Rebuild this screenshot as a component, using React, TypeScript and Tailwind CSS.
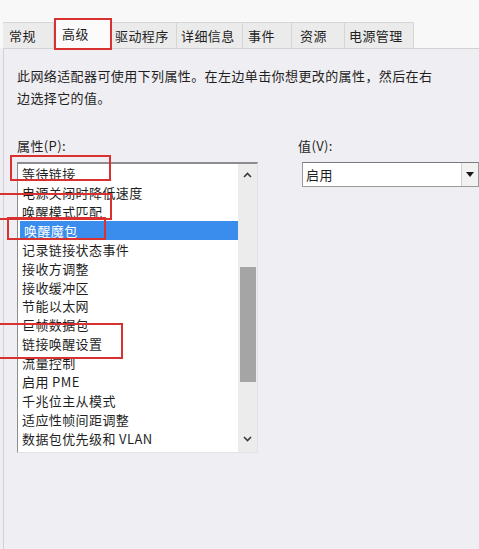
import React from 'react';

const FONT = '"Noto Sans CJK SC", "Noto Sans", "Liberation Sans", sans-serif';

const tabs = [
  { label: '常规', w: 'w-[51px] pl-[6px]' },
  { label: '高级', w: 'w-[58px] pl-[8px]', active: true },
  { label: '驱动程序', w: 'w-[65px] pl-[3px]' },
  { label: '详细信息', w: 'w-[66px] pl-[4px]' },
  { label: '事件', w: 'w-[49px] pl-[5px]' },
  { label: '资源', w: 'w-[53px] pl-[8px]' },
  { label: '电源管理', w: 'w-[69px] pl-[4px]' },
];

const properties = [
  '等待链接',
  '电源关闭时降低速度',
  '唤醒模式匹配',
  '唤醒魔包',
  '记录链接状态事件',
  '接收方调整',
  '接收缓冲区',
  '节能以太网',
  '巨帧数据包',
  '链接唤醒设置',
  '流量控制',
  '启用 PME',
  '千兆位主从模式',
  '适应性帧间距调整',
  '数据包优先级和 VLAN',
];

// red annotation frames drawn over the screenshot
const marks = [
  'left-[54px] top-[18px] w-[58px] h-[32px]',
  'left-[10px] top-[155px] w-[101px] h-[26px]',
  'left-[-2px] top-[193px] w-[114px] h-[27px]',
  'left-[7px] top-[217px] w-[99px] h-[23px]',
  'left-[-2px] top-[323px] w-[125px] h-[36px]',
];

const Chevron = ({ up }: { up?: boolean }) => (
  <svg width="9" height="6" viewBox="0 0 9 6">
    <path
      d={up ? 'M1 5 L4.5 1.5 L8 5' : 'M1 1 L4.5 4.5 L8 1'}
      fill="none"
      stroke="#3a3a3a"
      strokeWidth="1.6"
    />
  </svg>
);

export default function App() {
  return (
    <div
      className="relative w-[479px] h-[549px] overflow-hidden bg-[#efeef2] text-[13px] tracking-[0.4px] text-[#1f1f1f]"
      style={{ fontFamily: FONT }}
    >
      {/* window top strip */}
      <div className="h-[22px] bg-[#f8f8f8]" />

      {/* tabs */}
      <div className="flex h-[26px] items-stretch bg-[#f8f8f8] pl-[3px]">
        {tabs.map((t) => (
          <div
            key={t.label}
            className={`${t.w} flex items-center border-r border-[#d6d6d6] leading-none ${
              t.active ? 'bg-[#fbfbfb] -mt-[4px]' : 'bg-[#ebebeb] border-t'
            }`}
          >
            {t.label}
          </div>
        ))}
      </div>

      {/* content panel */}
      <div className="ml-[3px] h-full border-l border-t border-[#d2d2d2] pl-[13px] pt-[16px]">
        <p className="leading-[22px]">
          此网络适配器可使用下列属性。在左边单击你想更改的属性，然后在右
          <br />
          边选择它的值。
        </p>

        <div className="mt-[28px] flex">
          {/* properties */}
          <div className="w-[241px]">
            <div className="h-[18px] leading-[18px]">属性(P):</div>
            <div className="mt-[7px] flex h-[291px] border-t-2 border-l border-[#8d8d8d] border-r border-b border-r-[#e2e2e2] border-b-[#e2e2e2] bg-white">
              <div className="flex-1">
                {properties.map((p, i) => (
                  <div
                    key={p}
                    className={`h-[18.93px] pl-[4px] leading-[19px] whitespace-nowrap ${
                      i === 3 ? 'ml-[2px] pl-[2px] bg-[#3b8ded] text-white' : ''
                    }`}
                  >
                    {p}
                  </div>
                ))}
              </div>
              {/* scrollbar */}
              <div className="flex w-[19px] flex-col items-center bg-[#ececec]">
                <div className="flex h-[22px] items-center">
                  <Chevron up />
                </div>
                <div className="mt-[81px] h-[115px] w-[16px] bg-[#a5a5a5]" />
                <div className="flex-1" />
                <div className="flex h-[26px] items-center">
                  <Chevron />
                </div>
              </div>
            </div>
          </div>

          {/* value */}
          <div className="ml-[40px] flex-1">
            <div className="h-[18px] leading-[18px]">值(V):</div>
            <div className="ml-[4px] mt-[7px] flex h-[25px] border border-[#9a9a9a] border-t-[#7a7a7a] bg-white">
              <div className="flex-1 pl-[3px] leading-[23px]">启用</div>
              <div className="flex w-[17px] items-center justify-center border-l border-[#d0d0d0] bg-[#f2f2f2]">
                <svg width="8" height="5" viewBox="0 0 8 5">
                  <path d="M0 0 H8 L4 5 Z" fill="#1a1a1a" />
                </svg>
              </div>
            </div>
          </div>
        </div>
      </div>

      {marks.map((m) => (
        <div key={m} className={`absolute ${m} border-2 border-[#d8312f]`} />
      ))}
    </div>
  );
}
